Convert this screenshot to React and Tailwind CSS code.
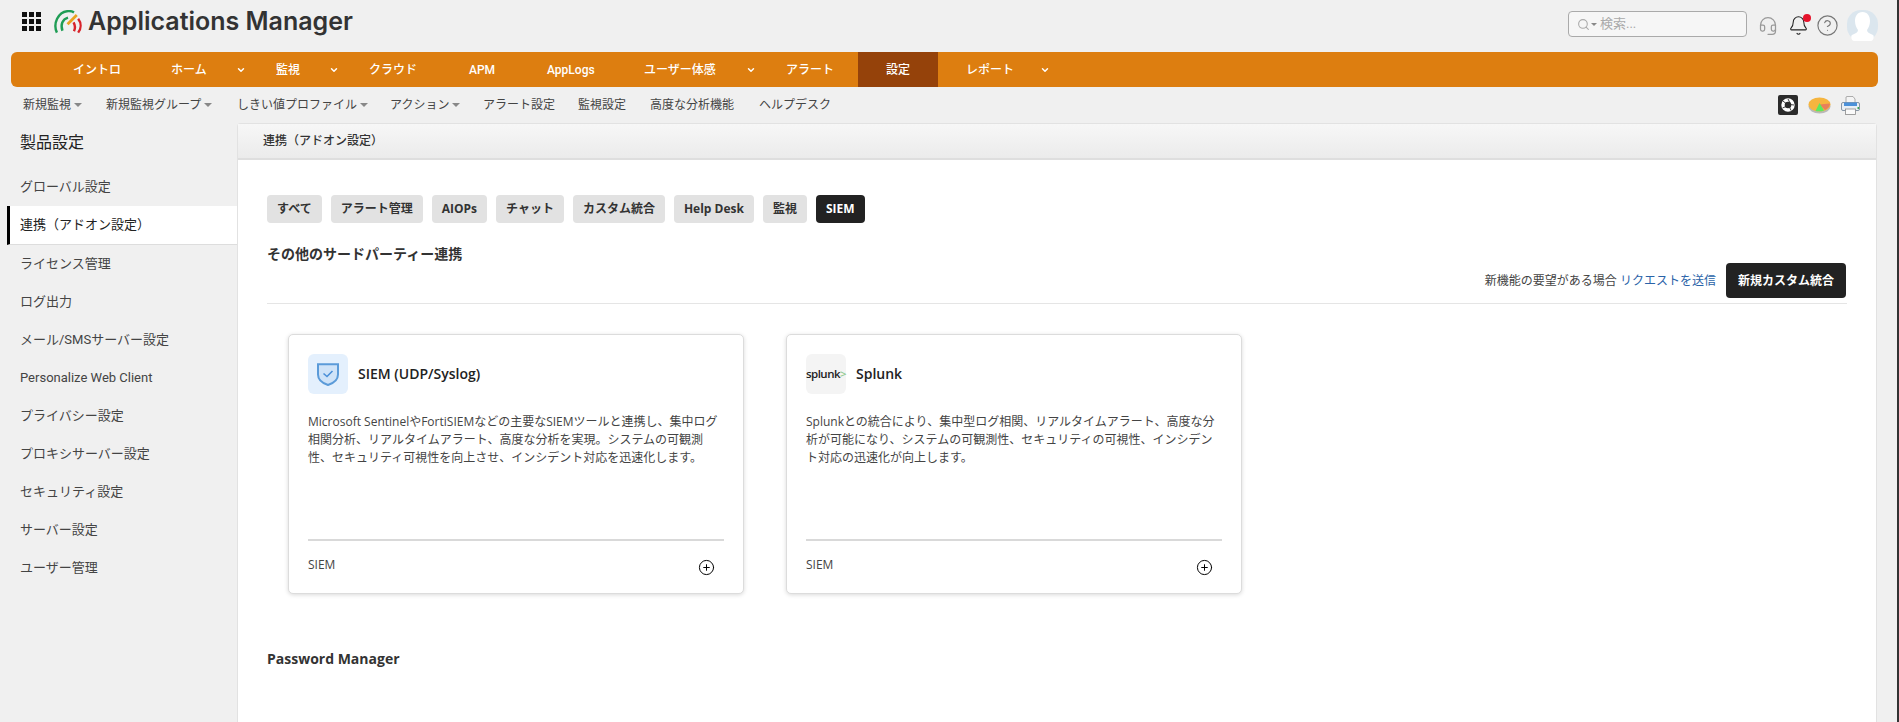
import React from "react";
import {Bell, ChevronDown, CircleHelp, CirclePlus, Headset, Search} from "lucide-react";

const mainNav = [
  {label: "イントロ", width: "w-[98px]"},
  {label: "ホーム", width: "w-[105px]", arrow: true},
  {label: "監視", width: "w-[93px]", arrow: true},
  {label: "クラウド", width: "w-[100px]"},
  {label: "APM", width: "w-[78px]"},
  {label: "AppLogs", width: "w-[97px]"},
  {label: "ユーザー体感", width: "w-[142px]", arrow: true},
  {label: "アラート", width: "w-[100px]"},
  {label: "設定", width: "w-[80px]", active: true},
  {label: "レポート", width: "w-[114px]", arrow: true},
];

const subNav = [
  {label: "新規監視", arrow: true, width: "w-[83px]"},
  {label: "新規監視グループ", arrow: true, width: "w-[131px]"},
  {label: "しきい値プロファイル", arrow: true, width: "w-[153px]"},
  {label: "アクション", arrow: true, width: "w-[93px]"},
  {label: "アラート設定", width: "w-[95px]"},
  {label: "監視設定", width: "w-[72px]"},
  {label: "高度な分析機能", width: "w-[109px]"},
  {label: "ヘルプデスク", width: "w-[80px]"},
];

const sideItems = [
  {label: "グローバル設定", height: "h-[39px]"},
  {label: "連携（アドオン設定）", height: "h-[39px]", active: true},
  {label: "ライセンス管理", height: "h-[38px]"},
  {label: "ログ出力", height: "h-[38px]"},
  {label: "メール/SMSサーバー設定", height: "h-[38px]"},
  {label: "Personalize Web Client", height: "h-[38px]"},
  {label: "プライバシー設定", height: "h-[38px]"},
  {label: "プロキシサーバー設定", height: "h-[38px]"},
  {label: "セキュリティ設定", height: "h-[38px]"},
  {label: "サーバー設定", height: "h-[38px]"},
  {label: "ユーザー管理", height: "h-[38px]"},
];

const tabs = ["すべて", "アラート管理", "AIOPs", "チャット", "カスタム統合", "Help Desk", "監視", "SIEM"];

function Logo() {
  return (
    <svg width="30" height="24" viewBox="0 0 32 26" fill="none" strokeWidth="2.6">
      <path d="M4 24.5C-0.5 15 5 2 16 1.2C18.5 1 21 1.6 22.5 2.6" stroke="#1f9d55" />
      <path d="M10 22.5C7.5 16 10 10 16 8.2" stroke="#1f9d55" />
      <path d="M15.5 15.5L25.5 5.5" stroke="#eaa21f" strokeWidth="3" />
      <path d="M27 9.5C30.5 14 30.5 20 27 24.5" stroke="#d8232a" />
      <path d="M22 13.5C24 17 24 20 22.5 23" stroke="#d8232a" />
    </svg>
  );
}

function Shield() {
  return (
    <svg width="24" height="24" viewBox="0 0 24 24" fill="none">
      <path
        d="M2 2.2H22V12.5C22 18 17.5 21.2 12 23C6.5 21.2 2 18 2 12.5Z"
        fill="#cfe3f8"
        stroke="#5b9bd9"
        strokeWidth="2"
      />
      <path d="M7.5 11.5L11 14.5L16.5 9" stroke="#4a8fd8" strokeWidth="1.6" />
    </svg>
  );
}

function ShutterIcon() {
  return (
    <svg width="14" height="14" viewBox="0 0 14 14" fill="none">
      <circle cx="7" cy="7" r="5" stroke="#fff" strokeWidth="3.4" />
      <path d="M7 1L9 5M13 7L9 6.5M10 12.5L8.5 9M1.5 10L5 8.5M2 3L5 5.5" stroke="#2b2b2b" strokeWidth="0.9" />
    </svg>
  );
}

function PieIcon() {
  return (
    <svg width="23" height="17" viewBox="0 0 23 17">
      <ellipse cx="11.5" cy="9.5" rx="11" ry="7" fill="#b9b9b9" />
      <ellipse cx="11.5" cy="7.5" rx="11" ry="7" fill="#f5b53f" />
      <path d="M11.5 7.5L22 6.5C22 9 20 11.5 17 13Z" fill="#e8805a" />
      <path d="M11.5 6L16 13.5C13.5 14.5 10 14.5 7.5 14Z" fill="#5ee85e" />
    </svg>
  );
}

function PrinterIcon() {
  return (
    <svg width="19" height="19" viewBox="0 0 19 19">
      <path d="M6 0.5H12L14 3V8H5V1Z" fill="#f4f4f4" stroke="#9a9a9a" strokeWidth="0.8" />
      <rect x="0.5" y="6.5" width="18" height="8" rx="1.5" fill="#e8eef4" stroke="#6e7f90" strokeWidth="0.8" />
      <rect x="3" y="6.5" width="13" height="3.5" fill="#4a90d9" />
      <rect x="4.5" y="13" width="10" height="5.5" fill="#fafafa" stroke="#8a8a8a" strokeWidth="0.8" />
      <rect x="16.5" y="11" width="1.5" height="2" fill="#3aa655" />
    </svg>
  );
}

function Avatar() {
  return (
    <svg width="31" height="31" viewBox="0 0 31 31">
      <rect width="31" height="31" rx="14" fill="#dbe6ee" />
      <path
        d="M15.5 2C20.5 2 23 6 23 11C23 15 21.5 18 20 20C20 22 22 23.5 26 25C27.5 26 26.5 31 24 31H7C4.5 31 3.5 26 5 25C9 23.5 11 22 11 20C9.5 18 8 15 8 11C8 6 10.5 2 15.5 2Z"
        fill="#fff"
      />
    </svg>
  );
}

function Card({icon, iconBg, title, desc}) {
  return (
    <div className="flex h-[260px] w-[456px] flex-col rounded-[5px] border border-[#dcdcdc] bg-white p-[19px] pb-0 shadow-[0_1px_4px_rgba(0,0,0,0.15)]">
      <div className="flex items-center gap-[10px]">
        <div className={`flex h-[40px] w-[40px] items-center justify-center rounded-[6px] ${iconBg}`}>{icon}</div>
        <span className="-mt-[2px] text-[14px] font-semibold text-[#222]">{title}</span>
      </div>
      <p className="mt-[19px] h-[126px] text-[12px] leading-[18px] text-[#444]">{desc}</p>
      <div className="h-[2px] bg-[#d9d9d9]" />
      <div className="flex justify-between pt-[15px] text-[12px] leading-[18px] text-[#444]">
        <span>SIEM</span>
        <CirclePlus size={17} strokeWidth={1.4} className="mr-[9px] mt-[3px] text-black" />
      </div>
    </div>
  );
}

export default function App() {
  return (
    <div className="flex h-screen overflow-hidden bg-[#f0f0f0] font-['Roboto','Noto_Sans_CJK_JP',sans-serif]">
      <div className="flex min-w-0 flex-1 flex-col">
        {/* top header */}
        <header className="flex h-[52px] shrink-0 items-start justify-between pr-[19px]">
          <div className="flex h-[43px] items-center">
            <div className="ml-[22px] grid grid-cols-3 gap-[2px]">
              {[0, 1, 2, 3, 4, 5, 6, 7, 8].map((i) => (
                <span key={i} className="h-[5px] w-[5px] bg-[#111]" />
              ))}
            </div>
            <div className="ml-[12px]">
              <Logo />
            </div>
            <span className="ml-[5px] font-['Inter',sans-serif] text-[25px] font-semibold text-[#333]">
              Applications Manager
            </span>
          </div>
          <div className="flex items-center pt-[10px]">
            <div className="-mt-[3px] flex h-[26px] w-[179px] items-center rounded-[4px] border border-[#aaa] bg-[#f6f6f6] pl-[8px]">
              <Search size={13} className="text-[#aaa]" />
              <span className="ml-px h-0 w-0 border-x-[3px] border-t-[3px] border-x-transparent border-t-[#888]" />
              <span className="ml-[3px] text-[13px] text-[#aaa]">検索...</span>
            </div>
            <Headset size={20} strokeWidth={1.5} className="ml-[11px] text-[#999]" />
            <div className="relative ml-[10px]">
              <Bell size={21} strokeWidth={1.2} className="text-[#222]" />
              <span className="absolute -top-[1px] right-[-2px] h-[8px] w-[8px] rounded-full bg-[#e5132b]" />
            </div>
            <CircleHelp size={23} strokeWidth={1.2} className="ml-[7px] text-[#777]" />
            <div className="ml-[8px]">
              <Avatar />
            </div>
          </div>
        </header>

        {/* orange main nav */}
        <nav className="ml-[11px] mr-[19px] flex h-[35px] shrink-0 rounded-[6px] bg-[#dd7e10] pl-[34px] text-[12px] font-medium text-white">
          {mainNav.map(({label, width, arrow, active}) => (
            <a key={label} className={`flex items-center pl-[28px] ${width} ${active ? "bg-[#95420a]" : ""}`}>
              <span>{label}</span>
              {arrow && <ChevronDown size={10} strokeWidth={3.5} className="ml-auto mr-[2px]" />}
            </a>
          ))}
        </nav>

        {/* sub nav */}
        <div className="flex h-[36px] shrink-0 items-center justify-between pl-[23px] pr-[37px] text-[12px] text-[#444]">
          <div className="flex items-center">
            {subNav.map(({label, arrow, width}) => (
              <a key={label} className={`flex items-center ${width}`}>
                <span>{label}</span>
                {arrow && (
                  <span className="ml-[3px] h-0 w-0 border-x-[4px] border-t-[4px] border-x-transparent border-t-[#888]" />
                )}
              </a>
            ))}
          </div>
          <div className="flex items-center gap-[10px]">
            <span className="flex h-[20px] w-[20px] items-center justify-center rounded-[2px] bg-[#2b2b2b]">
              <ShutterIcon />
            </span>
            <PieIcon />
            <PrinterIcon />
          </div>
        </div>

        <div className="flex min-h-0 flex-1">
          {/* sidebar */}
          <aside className="w-[237px] shrink-0 text-[13px] text-[#444]">
            <h2 className="flex h-[44px] items-center pb-[5px] pl-[20px] text-[16px] font-normal text-[#222]">製品設定</h2>
            {sideItems.map(({label, height, active}) =>
              active ? (
                <div
                  key={label}
                  className={`ml-[7px] flex items-center border-b border-l-[3px] border-b-[#ddd] border-l-black bg-white pl-[10px] text-[#222] ${height}`}
                >
                  {label}
                </div>
              ) : (
                <div key={label} className={`flex items-center pl-[20px] ${height}`}>
                  {label}
                </div>
              ),
            )}
          </aside>

          {/* main panel */}
          <main className="mr-[20px] min-w-0 flex-1 rounded-t-[4px] border-x border-t border-[#e2e2e2] bg-white font-['Open_Sans','Noto_Sans_CJK_JP',sans-serif]">
            <div className="flex h-[36px] items-center border-b-2 border-[#dedede] bg-gradient-to-b from-[#f7f7f7] to-[#ebebeb] pl-[25px] text-[12px] font-medium text-[#333]">
              連携（アドオン設定）
            </div>
            <div className="px-[29px] pt-[35px]">
              <div className="flex gap-[9px]">
                {tabs.map((tab) => (
                  <span
                    key={tab}
                    className={`flex h-[28px] items-center rounded-[4px] px-[10px] text-[12px] font-bold ${
                      tab === "SIEM" ? "bg-[#222] text-white" : "bg-[#e2e2e2] text-[#333]"
                    }`}
                  >
                    {tab}
                  </span>
                ))}
              </div>
              <h3 className="mt-[21px] h-[19px] text-[14px] font-bold leading-[19px] text-[#333]">
                その他のサードパーティー連携
              </h3>
              <div className="flex items-center justify-end gap-[10px] border-b border-[#e5e5e5] pb-[5px] pr-px">
                <span className="text-[12px] text-[#444]">
                  新機能の要望がある場合 <span className="text-[#2a63a8]">リクエストを送信</span>
                </span>
                <button className="h-[35px] w-[120px] rounded-[4px] bg-[#222] text-[12px] font-bold text-white">
                  新規カスタム統合
                </button>
              </div>
              <div className="ml-[21px] mt-[30px] flex gap-[42px]">
                <Card
                  icon={<Shield />}
                  iconBg="bg-[#e4f0fd]"
                  title="SIEM (UDP/Syslog)"
                  desc="Microsoft SentinelやFortiSIEMなどの主要なSIEMツールと連携し、集中ログ相関分析、リアルタイムアラート、高度な分析を実現。システムの可観測性、セキュリティ可視性を向上させ、インシデント対応を迅速化します。"
                />
                <Card
                  icon={
                    <span className="text-[11.5px] font-semibold tracking-[-0.5px] text-[#222]">
                      splunk<span className="text-[#8fc98f]">&gt;</span>
                    </span>
                  }
                  iconBg="bg-[#f4f4f4]"
                  title="Splunk"
                  desc="Splunkとの統合により、集中型ログ相関、リアルタイムアラート、高度な分析が可能になり、システムの可観測性、セキュリティの可視性、インシデント対応の迅速化が向上します。"
                />
              </div>
              <h3 className="mt-[55px] text-[14px] font-bold leading-[20px] text-[#333]">Password Manager</h3>
            </div>
          </main>
        </div>
      </div>
      <div className="w-[2px] shrink-0 bg-[#333]" />
    </div>
  );
}
